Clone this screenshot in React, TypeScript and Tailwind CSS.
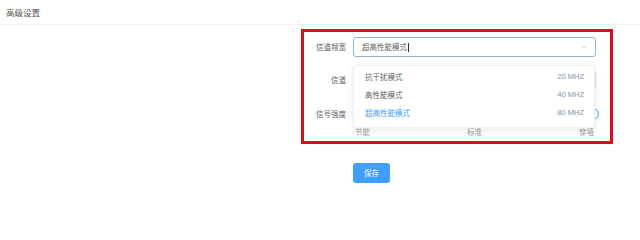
const bands = [
  { name: '抗干扰模式', value: '20 MHZ' },
  { name: '高性能模式', value: '40 MHZ' },
  { name: '超高性能模式', value: '80 MHZ', active: true },
]

function Row({ label, children }: { label: string; children: React.ReactNode }) {
  return (
    <div className="flex items-center h-[20px]">
      <div className="w-[49px] pr-[7px] text-right text-[7.5px] text-[#606266] whitespace-nowrap">
        {label}
      </div>
      <div className="relative w-[243px] h-full">{children}</div>
    </div>
  )
}

function BandSelect() {
  return (
    <>
      <div className="flex items-center h-full border border-[#8fb6cc] rounded-[3px] pl-[8px] pr-[8px] bg-white">
        <span className="text-[7.5px] text-[#606266]">超高性能模式</span>
        <span className="w-px h-[9px] bg-[#333] ml-px" />
        <svg className="ml-auto" width="6" height="4" viewBox="0 0 6 4">
          <polyline points="0.5,3.5 3,1 5.5,3.5" fill="none" stroke="#c0c4cc" strokeWidth="0.8" />
        </svg>
      </div>
      <div className="absolute left-0 top-[28px] z-10 w-[242px] bg-white border border-[#eef0f4] rounded-[2px] shadow-[0_2px_8px_rgba(0,0,0,0.08)] pt-[2px] pb-[5px]">
        {bands.map((b) => (
          <div key={b.name} className="flex items-center justify-between h-[18px] pl-[11px] pr-[10px]">
            <span className={b.active ? 'text-[7.5px] text-[#409eff]' : 'text-[7.5px] text-[#606266]'}>
              {b.name}
            </span>
            <span className="text-[7.5px] text-[#8492a6] font-['Liberation_Sans',sans-serif]">{b.value}</span>
          </div>
        ))}
      </div>
    </>
  )
}

export default function App() {
  return (
    <div className="w-[640px] h-[212px] bg-white font-['Noto_Sans_CJK_SC',sans-serif] overflow-hidden">
      <div className="h-[25px] flex items-center pl-[6px] border-b border-[#eef0f3] text-[8.5px] text-[#555]">
        高级设置
      </div>
      <div className="pl-[301px] pt-[4px]">
        <div className="w-[312px] h-[115px] border-[3px] border-[#d3121c] pt-[5px] flex flex-col">
          <Row label="信道频宽">
            <BandSelect />
          </Row>
          <div className="mt-[13px]">
            <Row label="信道">
              <div className="h-full border border-[#dcdfe6] rounded-[3px]" />
            </Row>
          </div>
          <div className="mt-[14px]">
            <Row label="信号强度">
              <div className="flex items-center h-full">
                <div className="relative w-full h-[4px] bg-[#409eff] rounded-full">
                  <span className="absolute right-0 top-1/2 translate-x-[3px] -translate-y-1/2 w-[11px] h-[11px] rounded-full bg-white border-[1.5px] border-[#409eff]" />
                </div>
              </div>
            </Row>
          </div>
          <div className="flex ml-[49px] w-[243px] px-[2px] mt-[2px] text-[7.5px] text-[#9a9ca1]">
            <span className="flex-1">节能</span>
            <span className="flex-1 text-center">标准</span>
            <span className="flex-1 text-right">穿墙</span>
          </div>
        </div>
        <button className="ml-[52px] mt-[19px] w-[37px] h-[20px] rounded-[3px] bg-[#409eff] text-white text-[7.5px] flex items-center justify-center">
          保存
        </button>
      </div>
    </div>
  )
}
